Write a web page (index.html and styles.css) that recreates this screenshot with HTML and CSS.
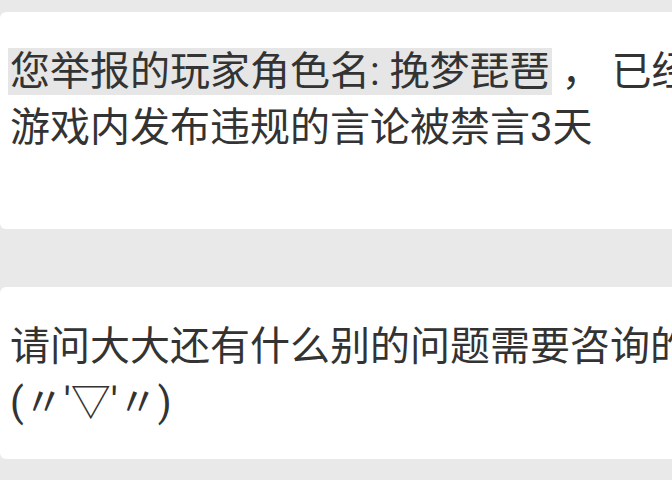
FILE: index.html
```html
<!DOCTYPE html>
<html>
  <head>
    <meta charset="utf-8">
    <title>客服消息</title>
    <link rel="stylesheet" href="styles.css">
  </head>
  <body>
    <div class="chat">
      <div class="msg msg-long">
        <p class="text"><span class="mark">您举报的玩家角色名: 挽梦琵琶</span> ， 已经核实，该玩家因在<br>游戏内发布违规的言论被禁言3天</p>
      </div>
      <div class="msg">
        <p class="text">请问大大还有什么别的问题需要咨询的吗？<br>(〃'▽'〃)</p>
      </div>
    </div>
  </body>
</html>
```

FILE: styles.css
```css
html, body {
  margin: 0;
  padding: 0;
  background: #e9e9e9;
  overflow: hidden;
}
.chat {
  display: flex;
  flex-direction: column;
  gap: 58px;
  padding-top: 12px;
  width: 1100px;
}
.msg {
  background: #fff;
  border-radius: 6px;
  padding: 32px 10px 28px;
}
.msg-long {
  padding-bottom: 73px;
}
.text {
  margin: 0;
  font-family: Roboto, "Noto Sans CJK SC", sans-serif;
  font-size: 40px;
  line-height: 56px;
  color: #333;
  white-space: nowrap;
}
.mark {
  background: #e6e6e6;
  padding: 0 2px;
  margin-left: -2px;
}
```
